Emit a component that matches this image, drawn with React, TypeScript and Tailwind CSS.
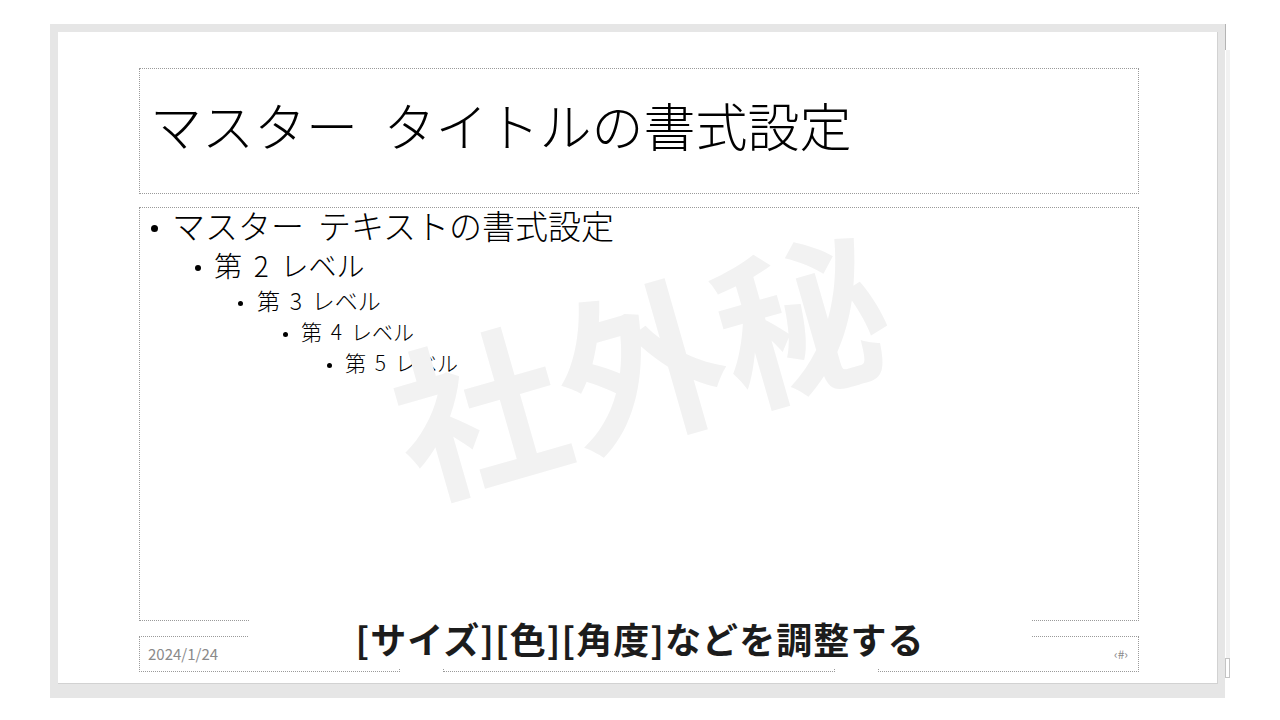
const jp = '[font-family:"Noto_Sans_CJK_JP","Noto_Sans",sans-serif]'

const levels = [
  { text: 'マスター テキストの書式設定', indent: 'pl-[11px]', size: 'text-[33px] h-[40px]', dot: 'w-[7px] h-[7px]', gap: 'mr-[14px]' },
  { text: '第 2 レベル', indent: 'pl-[55px]', size: 'text-[28px] h-[39px]', dot: 'w-[6px] h-[6px]', gap: 'mr-[13px]' },
  { text: '第 3 レベル', indent: 'pl-[98px]', size: 'text-[23px] h-[32px]', dot: 'w-[5px] h-[5px]', gap: 'mr-[14px]' },
  { text: '第 4 レベル', indent: 'pl-[143px]', size: 'text-[21px] h-[31px]', dot: 'w-[5px] h-[5px]', gap: 'mr-[13px]' },
  { text: '第 5 レベル', indent: 'pl-[187px]', size: 'text-[21px] h-[31px]', dot: 'w-[5px] h-[5px]', gap: 'mr-[13px]' },
]

function BodyText() {
  return (
    <div className="flex flex-col">
      {levels.map((l) => (
        <div key={l.text} className={`flex items-center ${l.indent} ${l.size} leading-none font-light text-black [word-spacing:0.2em]`}>
          <span className={`${l.dot} ${l.gap} shrink-0 rounded-full bg-black`} />
          <span className="pb-[6px]">{l.text}</span>
        </div>
      ))}
    </div>
  )
}

export default function App() {
  return (
    <div className={`w-[1280px] h-[720px] bg-white overflow-hidden relative ${jp}`}>
      <div className="absolute left-[1225px] top-[24px] w-[1px] h-[26px] bg-[#b4b4b4]" />
      <div className="absolute left-[1226px] top-[50px] w-[4px] h-[608px] bg-[#f2f2f2]" />
      <div className="absolute left-[1225px] top-[658px] w-[5px] h-[20px] border border-[#c4c4c4] bg-white" />

      <div className="pt-[24px] pl-[50px]">
        <div className="w-[1175px] h-[674px] bg-[#e6e6e6] pt-[8px] pl-[8px]">
          <div className="relative w-[1160px] h-[652px] bg-white border-r border-b border-[#d2d2d2] overflow-hidden">
            <div className="flex flex-col pl-[81px] pt-[36px] gap-[13px]">
              <div className="w-[1000px] h-[126px] border border-dotted border-[#9a9a9a] flex items-center pl-[10px] pb-[12px]">
                <span className="text-[52px] font-light text-black leading-none [word-spacing:14px]">マスター タイトルの書式設定</span>
              </div>

              <div className="w-[1000px] h-[414px] border border-dotted border-[#9a9a9a]">
                <BodyText />
              </div>

              <div className="flex gap-[43px] mt-[2px]">
                <div className="w-[261px] h-[36px] border border-dotted border-[#9a9a9a] flex items-center pl-[8px] pb-[2px]">
                  <span className="text-[15px] text-[#8a8a8a] leading-none">2024/1/24</span>
                </div>
                <div className="w-[392px] h-[36px] border border-dotted border-[#9a9a9a]" />
                <div className="w-[261px] h-[36px] border border-dotted border-[#9a9a9a] flex items-center justify-end pr-[10px]">
                  <span className="text-[12px] text-[#8a8a8a] leading-none">‹#›</span>
                </div>
              </div>
            </div>

            {/* watermark sits above the body text */}
            <div className="absolute left-[580px] top-[326px] -translate-x-1/2 -translate-y-1/2 -rotate-[16deg] pointer-events-none">
              <span className="block text-[168px] font-bold leading-none text-[#f2f2f2] whitespace-nowrap">社外秘</span>
            </div>

            {/* caption overlay */}
            <div className="absolute left-[191px] top-[580px] w-[782px] h-[56px] bg-white flex items-center justify-center pb-[4px]">
              <span className="text-[36px] font-bold text-[#1c1c1c] leading-none tracking-[0.03em]">[サイズ][色][角度]などを調整する</span>
            </div>
          </div>
        </div>
      </div>
    </div>
  )
}
